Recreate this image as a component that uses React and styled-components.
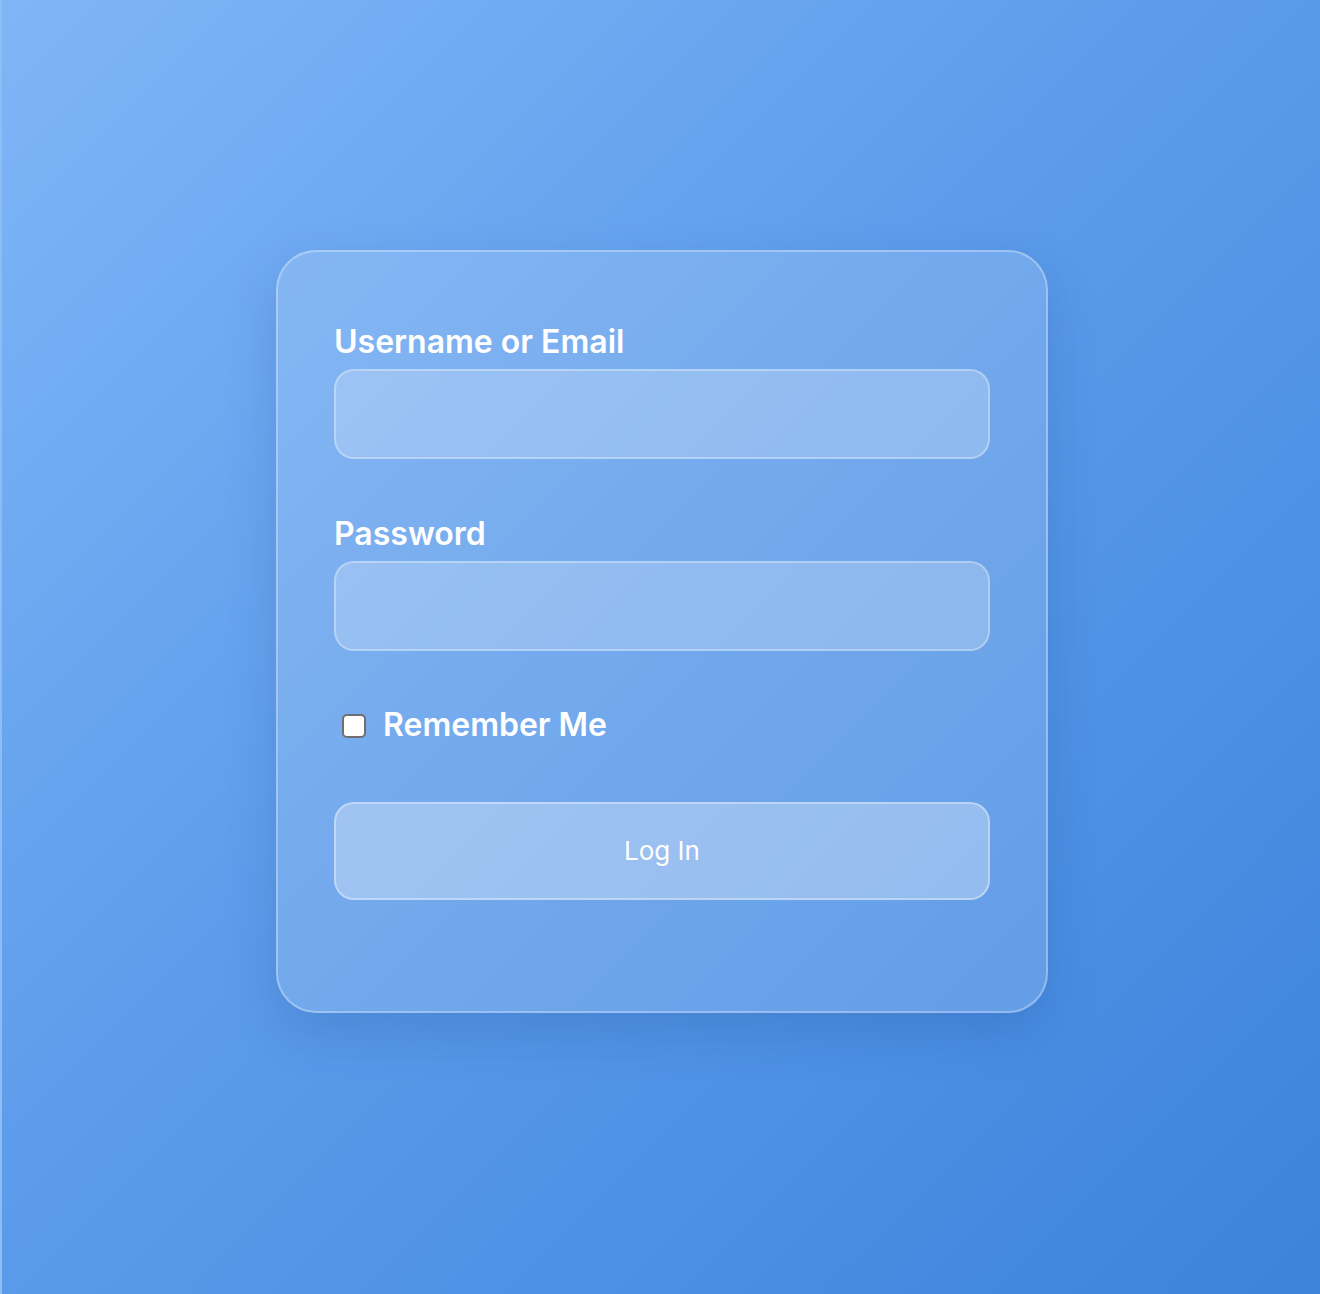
import React, { useState } from 'react';
import styled, { createGlobalStyle } from 'styled-components';

const GlobalStyle = createGlobalStyle`
    * {
        box-sizing: border-box;
    }

    html, body {
        margin: 0;
        padding: 0;
    }

    body {
        font-family: Inter, "Noto Sans", "Liberation Sans", sans-serif;
        -webkit-font-smoothing: antialiased;
    }
`;

const Page = styled.div`
    min-height: 1294px;
    padding: 0 0 32px 2px;
    display: flex;
    justify-content: center;
    align-items: center;
    background: linear-gradient(135deg, #7fb6f7 0%, #5d9ceb 45%, #3c83dc 100%);
    border-left: 2px solid #8dbdf5;
`;

const Card = styled.form`
    width: 772px;
    padding: 71px 56px 111px;
    display: flex;
    flex-direction: column;
    background: rgba(255, 255, 255, 0.15);
    border: 2px solid rgba(255, 255, 255, 0.3);
    border-radius: 40px;
    box-shadow: 0 20px 50px rgba(20, 60, 130, 0.18);
`;

const Field = styled.div`
    display: flex;
    flex-direction: column;
    gap: 8px;
    margin-bottom: ${(p) => p.$gap || 0}px;
`;

const Label = styled.label`
    font-size: 32px;
    line-height: 38px;
    font-weight: 600;
    color: #ffffff;
`;

const Input = styled.input`
    height: 90px;
    width: 100%;
    padding: 0 24px;
    font-size: 26px;
    font-family: inherit;
    color: #ffffff;
    background: rgba(255, 255, 255, 0.22);
    border: 2px solid rgba(255, 255, 255, 0.3);
    border-radius: 20px;
    outline: none;
`;

const CheckRow = styled.label`
    display: flex;
    align-items: center;
    gap: 17px;
    height: 38px;
    margin: 55px 0 58px;
    font-size: 32px;
    font-weight: 600;
    color: #ffffff;
    cursor: pointer;
`;

const Check = styled.input`
    appearance: none;
    flex: none;
    width: 24px;
    height: 24px;
    margin: 2px 0 0 8px;
    background: #ffffff;
    border: 2px solid #6f6f6f;
    border-radius: 5px;
    cursor: pointer;

    &:checked {
        background: #1a73e8;
        border-color: #1a73e8;
    }
`;

const Button = styled.button`
    height: 98px;
    width: 100%;
    font-family: inherit;
    font-size: 26px;
    font-weight: 400;
    color: #ffffff;
    background: rgba(255, 255, 255, 0.3);
    border: 2px solid rgba(255, 255, 255, 0.35);
    border-radius: 20px;
    cursor: pointer;
`;

const App = () => {
    const [usuario, setUsuario] = useState('');
    const [senha, setSenha] = useState('');
    const [lembrar, setLembrar] = useState(false);

    return (
        <Page>
            <GlobalStyle />
            <Card onSubmit={(e) => e.preventDefault()}>
                <Field $gap={56}>
                    <Label htmlFor="user">Username or Email</Label>
                    <Input id="user" value={usuario} onChange={(e) => setUsuario(e.target.value)} />
                </Field>
                <Field>
                    <Label htmlFor="pass">Password</Label>
                    <Input
                        id="pass"
                        type="password"
                        value={senha}
                        onChange={(e) => setSenha(e.target.value)}
                    />
                </Field>
                <CheckRow>
                    <Check type="checkbox" checked={lembrar} onChange={(e) => setLembrar(e.target.checked)} />
                    Remember Me
                </CheckRow>
                <Button type="submit">Log In</Button>
            </Card>
        </Page>
    );
};

export default App;
